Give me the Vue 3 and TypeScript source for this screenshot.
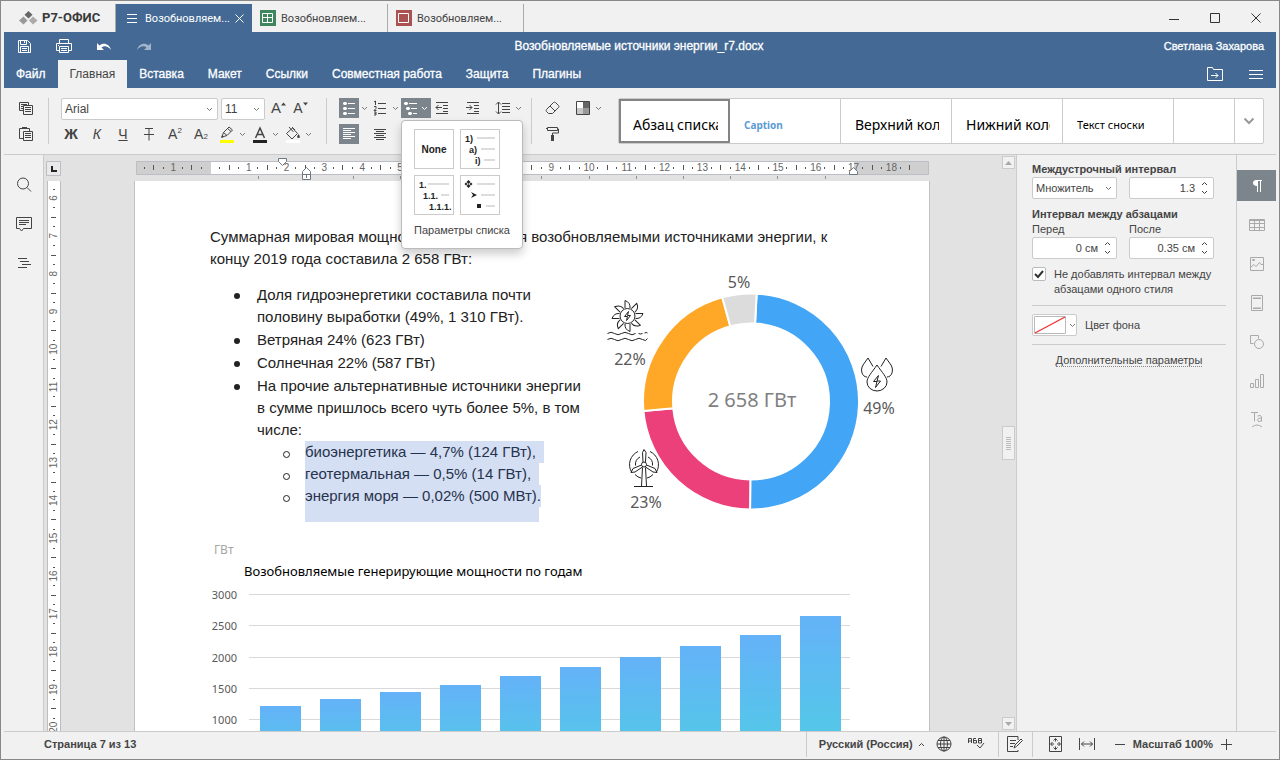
<script setup lang="ts">
import { ref } from 'vue'

interface Slice { from: number; to: number; color: string }

const menuTabs = ['Файл', 'Главная', 'Вставка', 'Макет', 'Ссылки', 'Совместная работа', 'Защита', 'Плагины']
const activeTab = ref('Главная')
const keepTogether = ref(true)

const styleItems = [
  { name: 'Абзац списка', kind: 'large' },
  { name: 'Caption', kind: 'caption' },
  { name: 'Верхний колонтитул', kind: 'large' },
  { name: 'Нижний колонтитул', kind: 'large' },
  { name: 'Текст сноски', kind: 'small' }
]

const CM = 37.8
const ORIGIN = 75
const rulerNumbers = [-1, ...Array.from({ length: 18 }, (_, i) => i + 1)]
const quarterTicks = Array.from({ length: 82 }, (_, i) => i - 7).filter(q => q % 4 !== 0 && q < 79)
const tabStops = Array.from({ length: 13 }, (_, i) => ORIGIN + (i + 1) * 47.2)
const atCm = (cm: number) => ORIGIN + cm * CM

const sideNumbers = Array.from({ length: 15 }, (_, i) => i + 6)
const sideTicks = Array.from({ length: 60 }, (_, i) => i + 23).filter(q => q % 4 !== 0)
const sideAt = (cm: number) => 17 + (cm - 6) * CM

const slices: Slice[] = [
  { from: 3, to: 180.5, color: '#42a5f5' },
  { from: 180.5, to: 265, color: '#ec407a' },
  { from: 265, to: 344.6, color: '#ffa726' },
  { from: 344.6, to: 363, color: '#dcdcdc' }
]
function ringPath(s: Slice): string {
  const cx = 151, cy = 131.5, outer = 108, inner = 78
  const p = (deg: number, r: number) => {
    const a = (deg * Math.PI) / 180
    return `${(cx + r * Math.sin(a)).toFixed(2)} ${(cy - r * Math.cos(a)).toFixed(2)}`
  }
  const large = s.to - s.from > 180 ? 1 : 0
  return `M${p(s.from, outer)}A${outer} ${outer} 0 ${large} 1 ${p(s.to, outer)}L${p(s.to, inner)}A${inner} ${inner} 0 ${large} 0 ${p(s.from, inner)}Z`
}

const capacities = [1216, 1328, 1440, 1552, 1696, 1840, 2000, 2176, 2352, 2656]
const axis = [3000, 2500, 2000, 1500, 1000, 500, 0]
const yOf = (v: number) => Math.round(10 + (3000 - v) / 16)
const petals = [0, 45, 90, 135, 180, 225, 270, 315]
</script>

<template>
  <div class="window">
    <svg class="defs" width="0" height="0" aria-hidden="true">
      <defs>
        <symbol id="caret" viewBox="0 0 7 5"><path d="M1 1l2.5 2.5L6 1" fill="none" stroke="currentColor" /></symbol>
        <symbol id="caret-up" viewBox="0 0 7 5"><path d="M1 4l2.5-2.5L6 4" fill="none" stroke="currentColor" /></symbol>
      </defs>
    </svg>

    <header class="titlebar">
      <div class="logo">
        <svg width="19" height="14" viewBox="0 0 19 14">
          <path d="M9.500 0l4 3.700-4 3.700-4-3.700z" fill="#666" />
          <path d="M4.500 5.500l4 4-4 4-4.500-4z" fill="#999" />
          <path d="M14 5.500l4.500 4-4.500 4-4-4z" fill="#aaa" />
        </svg>
        <span>Р7-ОФИС</span>
      </div>
      <div class="doc-tab current">
        <svg width="16" height="16" viewBox="0 0 16 16"><path d="M3 4.500h10M3 8.500h10M3 12.500h10" stroke="#fff" /></svg>
        <span>Возобновляем...</span>
        <button class="close" aria-label="Закрыть вкладку"><svg width="9" height="9" viewBox="0 0 9 9"><path d="M.5.5l8 8M8.500.5l-8 8" stroke="#fff" /></svg></button>
      </div>
      <div class="doc-tab">
        <svg width="16" height="16" viewBox="0 0 16 16"><path fill="#40865c" d="M0 0h16v16H0z" /><path d="M2.500 3.500h10v9h-10zM7.500 3v10M3 7.500h10" fill="none" stroke="#fff" /></svg>
        <span>Возобновляем...</span>
      </div>
      <div class="doc-tab">
        <svg width="16" height="16" viewBox="0 0 16 16"><path fill="#aa5252" d="M0 0h16v16H0z" /><path d="M2.500 3.500h10v9h-10z" fill="none" stroke="#fff" /></svg>
        <span>Возобновляем...</span>
      </div>
      <div class="window-buttons">
        <button aria-label="Свернуть"><svg width="12" height="12" viewBox="0 0 12 12"><path d="M1 7.500h10" /></svg></button>
        <button aria-label="Развернуть"><svg width="12" height="12" viewBox="0 0 12 12"><path d="M1.500 1.500h9v9h-9z" /></svg></button>
        <button aria-label="Закрыть"><svg width="12" height="12" viewBox="0 0 12 12"><path d="M1.500 1.500l9 9M10.500 1.500l-9 9" /></svg></button>
      </div>
    </header>

    <div class="brand">
      <div class="brand-row">
        <div class="quick">
          <button aria-label="Сохранить"><svg width="20" height="20" viewBox="0 0 20 20"><path d="M4.500 4.500h9l3 3v9h-12zM6.500 5v3.500h6V5M6.500 16v-5.500h8V16M8 12.500h5M8 14.500h5M10.500 5v2" /></svg></button>
          <button aria-label="Печать"><svg width="20" height="20" viewBox="0 0 20 20"><path d="M5.500 7V3.500h9V7M5 14.500H2.500v-7h15v7H15M5.500 10.500h9v6h-9zM7 12.500h6M7 14.500h6M4 9.500h1" /></svg></button>
          <button aria-label="Отменить"><svg width="20" height="20" viewBox="0 0 20 20"><path d="M3 7v7h7L7.500 11.500C10 9.500 14 10 17 14 15.500 7.500 9 6 5.500 9.500z" class="solid" /></svg></button>
          <button aria-label="Повторить" class="faded"><svg width="20" height="20" viewBox="0 0 20 20"><path d="M17 7v7h-7l2.500-2.500C10 9.500 6 10 3 14 4.500 7.500 11 6 14.500 9.500z" class="solid" /></svg></button>
        </div>
        <h1>Возобновляемые источники энергии_r7.docx</h1>
        <span class="user">Светлана Захарова</span>
      </div>
      <div class="brand-row">
        <nav class="menu-tabs">
          <button v-for="t in menuTabs" :key="t" :class="{ on: t === activeTab }" @click="activeTab = t">{{ t }}</button>
        </nav>
        <div class="brand-tools">
          <button aria-label="Открыть папку"><svg width="18" height="16" viewBox="0 0 18 16"><path d="M1.500 14.500v-13h5l1 2h9v11zM5 9.500h7M9.500 7l2.500 2.500L9.500 12" /></svg></button>
          <button aria-label="Параметры вида"><svg width="16" height="16" viewBox="0 0 16 16"><path d="M1 4.500h14M1 8.500h14M1 12.500h14" /></svg></button>
        </div>
      </div>
    </div>

    <div class="toolbar">
      <div class="group clip">
        <button class="tool" aria-label="Копировать"><svg width="20" height="20" viewBox="0 0 20 20"><path d="M7 12.500H3.500v-8h9V7M5 6.500h6M5 8.500h2M5 10.500h2M7.500 7.500h9v9h-9zM9 9.500h6M9 11.500h6M9 13.500h6" /></svg></button>
        <button class="tool" aria-label="Вставить"><svg width="20" height="20" viewBox="0 0 20 20"><path d="M7 14.500H3.500v-10h10V7M6 3.500h5M6 4.500h5M7.500 7.500h9v9h-9zM9 9.500h6M9 11.500h6M9 13.500h6" /></svg></button>
      </div>
      <div class="group text-group">
        <div class="row">
          <div class="combo family"><select aria-label="Шрифт"><option>Arial</option></select><svg width="7" height="5"><use href="#caret" /></svg></div>
          <div class="combo size"><select aria-label="Размер шрифта"><option>11</option></select><svg width="7" height="5"><use href="#caret" /></svg></div>
          <button class="tool glyph scale" aria-label="Увеличить шрифт"><span class="big">A</span><svg class="mark" width="5" height="4" viewBox="0 0 5 4"><path class="fill" d="M0 3.500L2.500.5 5 3.500z" /></svg></button>
          <button class="tool glyph scale" aria-label="Уменьшить шрифт"><span>A</span><svg class="mark" width="5" height="4" viewBox="0 0 5 4"><path class="fill" d="M0 .5h5L2.500 3.500z" /></svg></button>
        </div>
        <div class="row spaced">
          <button class="tool glyph"><b>Ж</b></button>
          <button class="tool glyph"><i>К</i></button>
          <button class="tool glyph"><u>Ч</u></button>
          <button class="tool glyph" aria-label="Зачёркнутый"><svg width="20" height="20" viewBox="0 0 20 20"><path d="M6 4.500h8M10 4.500v12M5 10.500h10" /></svg></button>
          <button class="tool glyph">A<sup>2</sup></button>
          <button class="tool glyph">A<sub>2</sub></button>
          <div class="splits">
            <button class="tool" aria-label="Цвет выделения"><svg width="20" height="20" viewBox="0 0 20 20"><path d="M5 13l1.500-4.500L12 3l3.500 3L10 11.500zM6.500 8.500L10 11.500M10.500 4.500l3.500 3" /><path class="fill" d="M4 14l1-3 2 2z" /><path d="M3 16h14v3H3z" fill="#ff0" class="swatch" /></svg></button>
            <button class="arrow" aria-label="Выбрать цвет выделения"><svg width="7" height="5"><use href="#caret" /></svg></button>
            <button class="tool" aria-label="Цвет шрифта"><svg width="20" height="20" viewBox="0 0 20 20"><path d="M5.500 14L10 4l4.500 10M7 10.500h6" stroke-width="1.500" /><path d="M3 16h14v3H3z" fill="#222" class="swatch" /></svg></button>
            <button class="arrow" aria-label="Выбрать цвет шрифта"><svg width="7" height="5"><use href="#caret" /></svg></button>
            <button class="tool" aria-label="Заливка"><svg width="20" height="20" viewBox="0 0 20 20"><path d="M3.500 9.500l6-5.500 5 5.500-5.500 5.500zM6 3l4.500 5M9 3l3 3" /><path class="fill" d="M15.500 10c2 2.500 1.500 4 0 4s-2-1.500 0-4z" /><path d="M3 16h14v3H3z" fill="#fff" class="swatch" /></svg></button>
            <button class="arrow" aria-label="Выбрать заливку"><svg width="7" height="5"><use href="#caret" /></svg></button>
          </div>
        </div>
      </div>
      <div class="group para-group">
        <div class="row flush">
          <button class="tool on" aria-label="Маркированный список"><svg width="20" height="20" viewBox="0 0 20 20"><path d="M9 5.500h7M9 10.500h7M9 15.500h7" /><path class="fill" d="M5 4h2l1 1v1L7 7H5L4 6V5zM5 9h2l1 1v1l-1 1H5l-1-1v-1zM5 14h2l1 1v1l-1 1H5l-1-1v-1z" /></svg></button>
          <button class="arrow" aria-label="Маркеры"><svg width="7" height="5"><use href="#caret" /></svg></button>
          <button class="tool" aria-label="Нумерованный список"><svg width="20" height="20" viewBox="0 0 20 20"><path d="M8 5.500h8M8 10.500h8M8 15.500h8M4 4l1.500-1v4M4 8.500h2v2L4 12.500h2.500M4 14h2v1.500H4.500M6 15.500V17H4" /></svg></button>
          <button class="arrow" aria-label="Нумерация"><svg width="7" height="5"><use href="#caret" /></svg></button>
          <div class="multi">
            <button class="tool on wide" aria-label="Многоуровневый список"><svg width="20" height="20" viewBox="0 0 20 20"><path d="M8 5.500h8M10 10.500h6M12 15.500h4" /><path class="fill" d="M4 4h2l1 1v1L6 7H4L3 6V5zM6 9h2l1 1v1l-1 1H6l-1-1v-1zM8 14h2l1 1v1l-1 1H8l-1-1v-1z" /></svg><svg width="7" height="5"><use href="#caret" /></svg></button>
            <div class="popup">
              <div class="presets">
                <button aria-label="Нет"><svg width="38" height="38" viewBox="0 0 38 38"><text class="none" x="19" y="23" text-anchor="middle">None</text></svg></button>
                <button aria-label="1) a) i)"><svg width="38" height="38" viewBox="0 0 38 38"><text x="4" y="12">1)</text><text x="8" y="23">a)</text><text x="14" y="34">i)</text><path d="M16 8h18M20 19h14M23 30h11" /></svg></button>
                <button aria-label="1. 1.1. 1.1.1."><svg width="38" height="38" viewBox="0 0 38 38"><text x="4" y="12">1.</text><text x="8" y="23">1.1.</text><text x="14" y="34">1.1.1.</text><path d="M13 8h21M26 19h8" /></svg></button>
                <button aria-label="Маркеры по уровням"><svg width="38" height="38" viewBox="0 0 38 38"><path class="ink" d="M7.500 4l2 2-2 2-2-2zM5 6.500l1.500 1.500L5 9.500 3.500 8zM10 6.500l1.500 1.500-1.500 1.500L8.500 8zM7.500 8l2 2-2 2-2-2zM10 16l6 3-6 3 2-3zM16 28h4v4h-4z" /><path d="M16 8h18M20 19h14M25 30h9" /></svg></button>
              </div>
              <button class="popup-item">Параметры списка</button>
            </div>
          </div>
          <button class="tool indent" aria-label="Уменьшить отступ"><svg width="20" height="20" viewBox="0 0 20 20"><path d="M4 4.500h12M11 7.500h5M11 10.500h5M11 13.500h5M4 15.500h12M4 9.500h6M6.500 7L4 9.500 6.500 12" /></svg></button>
          <button class="tool indent" aria-label="Увеличить отступ"><svg width="20" height="20" viewBox="0 0 20 20"><path d="M4 4.500h12M11 7.500h5M11 10.500h5M11 13.500h5M4 15.500h12M3 9.500h6M6.500 7L9 9.500 6.500 12" /></svg></button>
          <button class="tool" aria-label="Междустрочный интервал"><svg width="20" height="20" viewBox="0 0 20 20"><path d="M9 5.500h8M9 8.500h8M9 11.500h8M9 14.500h8M5.500 4v12M3 6.500L5.500 4 8 6.500M3 13.500L5.500 16 8 13.500" /></svg></button>
          <button class="arrow" aria-label="Выбрать интервал"><svg width="7" height="5"><use href="#caret" /></svg></button>
        </div>
        <div class="row aligns">
          <button class="tool on" aria-label="По левому краю"><svg width="20" height="20" viewBox="0 0 20 20"><path d="M4 4.500h12M4 6.500h8M4 8.500h12M4 10.500h8M4 12.500h12M4 14.500h8" /></svg></button>
          <button class="tool" aria-label="По центру"><svg width="20" height="20" viewBox="0 0 20 20"><path d="M4 5.500h12M6 7.500h8M4 9.500h12M6 11.500h8M4 13.500h12M6 15.500h8" /></svg></button>
        </div>
      </div>
      <div class="group last">
        <div class="row flush">
          <button class="tool eraser" aria-label="Очистить стиль"><svg width="20" height="20" viewBox="0 0 20 20"><path d="M4.500 11.500l7-7q1-.8 2 0l3 3q1 1 0 2l-6 6h-4l-2-2q-.8-1 0-2zM8 8l5 5" /></svg></button>
          <button class="tool" aria-label="Цветовая схема"><svg width="20" height="20" viewBox="0 0 20 20"><path class="pale" fill="#fff" d="M4 4h12v12H4z" /><path class="pale" fill="#666" d="M10 4h6v6h-6z" /><path class="pale" fill="#c8c8c8" d="M4 10h6v6H4z" /><path class="pale" fill="#999" d="M10 10h6v6h-6z" /><path d="M3.500 3.500h13v13h-13z" /></svg></button>
          <button class="arrow" aria-label="Выбрать схему"><svg width="7" height="5"><use href="#caret" /></svg></button>
        </div>
        <div class="row">
          <button class="tool" aria-label="Копировать стиль"><svg width="20" height="20" viewBox="0 0 20 20"><path d="M5.500 3.500h10v3h-10zM15.500 5h1v4h-6v3" /><path d="M4 4.500h1.500" /><path class="fill" d="M9 11h3v6H9z" /></svg></button>
        </div>
      </div>
      <div class="gallery">
        <button v-for="(s, i) in styleItems" :key="s.name" :class="['style', s.kind, { chosen: i === 0 }]"><span>{{ s.name }}</span></button>
        <div class="rest"></div>
        <button class="more" aria-label="Все стили"><svg width="12" height="8" viewBox="0 0 12 8"><path d="M1.500 1.500l4.500 4.500 4.500-4.500" fill="none" stroke="#999" stroke-width="2" /></svg></button>
      </div>
    </div>

    <div class="workspace">
      <aside class="left-bar">
        <button aria-label="Поиск"><svg width="20" height="20" viewBox="0 0 20 20"><circle cx="9" cy="8.500" r="5.500" /><path d="M13 12.500l4 4" /></svg></button>
        <button aria-label="Комментарии"><svg width="20" height="20" viewBox="0 0 20 20"><path d="M2.500 3.500h15v11h-8L7.500 17l-2-2.500h-3zM5 6.500h10M5 8.500h10M5 10.500h7" /></svg></button>
        <button aria-label="Навигация"><svg width="20" height="20" viewBox="0 0 20 20"><path d="M4 5.500h9M6 8.500h9M8 11.500h9M4 14.500h9" /></svg></button>
      </aside>

      <main class="editor">
        <div class="corner"><svg width="15" height="15" viewBox="0 0 15 15"><path d="M.5.5h14v14H.5z" fill="#e9e9e9" stroke="#bbbec2" /><path d="M6 5v5h5" fill="none" stroke="#222" stroke-width="2" /></svg></div>
        <svg class="side-ruler" width="14" height="550" viewBox="0 0 14 550">
          <path d="M0 0h14v550H0z" fill="#fff" /><path d="M.5 0v550M13.500 0v550" stroke="#bbbec2" />
          <path v-for="q in sideTicks" :key="q" :d="q % 2 ? `M6 ${Math.round(sideAt(q / 4))}.5h2` : `M4 ${Math.round(sideAt(q / 4))}.5h5`" stroke="#555" />
          <text v-for="n in sideNumbers" :key="n" :transform="`translate(10 ${sideAt(n)}) rotate(-90)`" text-anchor="middle">{{ n }}</text>
        </svg>

        <div class="canvas">
          <svg class="ruler" width="793" height="20" viewBox="0 0 793 20">
            <path d="M.5.5h792v13H.5z" fill="#cfcfcf" stroke="#bbbec2" /><path d="M75 1h643v12H75z" fill="#fff" />
            <path v-for="q in quarterTicks" :key="q" :d="q % 2 ? `M${Math.round(atCm(q / 4)) - 1}.5 6v2` : `M${Math.round(atCm(q / 4)) - 1}.5 4v5`" stroke="#555" />
            <text v-for="n in rulerNumbers" :key="n" :x="atCm(n)" y="10" text-anchor="middle">{{ Math.abs(n) }}</text>
            <path v-for="t in tabStops" :key="t" :d="`M${Math.round(t)}.5 15v3`" stroke="#8a93a6" />
            <g fill="#fff" stroke="#6f7782"><path d="M142.500-2.500h8v3l-4 4-4-4z" /><path d="M166.500 18.500v-8l4-4 4 4v8zM166.500 13.500h8M170.500 14v3" /><path d="M713.500 13.500v-3l4-4 4 4v3z" /></g>
          </svg>
          <article class="page">
            <p>Суммарная мировая мощность, создаваемая возобновляемыми источниками энергии, к<br />концу 2019 года составила 2 658 ГВт:</p>
            <div class="columns">
              <ul>
                <li>Доля гидроэнергетики составила почти<br />половину выработки (49%, 1 310 ГВт).</li>
                <li>Ветряная 24% (623 ГВт)</li>
                <li>Солнечная 22% (587 ГВт)</li>
                <li>На прочие альтернативные источники энергии<br />в сумме пришлось всего чуть более 5%, в том<br />числе:
                  <ul class="inner">
                    <li><span>биоэнергетика — 4,7% (124 ГВт),</span></li>
                    <li><span>геотермальная — 0,5% (14 ГВт),</span></li>
                    <li><span>энергия моря — 0,02% (500 МВт).</span></li>
                  </ul>
                </li>
              </ul>
              <svg class="donut" width="300" height="250" viewBox="0 0 300 250">
                <path v-for="s in slices" :key="s.color" :d="ringPath(s)" :fill="s.color" stroke="#fff" stroke-width="2" />
                <text class="total" x="152" y="137" text-anchor="middle">2 658 ГВт</text>
                <g class="pct" text-anchor="middle"><text x="139" y="18">5%</text><text x="30" y="95">22%</text><text x="46" y="238">23%</text><text x="279" y="144">49%</text></g>
                <g class="sketch">
                  <g transform="translate(27.500 46)">
                    <circle r="7.500" />
                    <path v-for="a in petals" :key="a" :transform="`rotate(${a})`" d="M-2.500-8V-15.500Q3-13.500 2.500-8" />
                    <path d="M1-4.500L-3 .5H0L-1 4.500 3-.5H0z" />
                    <path d="M-20 17.500q3.500-2.500 7 0t7 0 7 0 7 0M11 17.500q2 1 4 0M17 17q2-1 3 0M-20 23.500q3.500-2.500 7 0t7 0 7 0 7 0 7 0 5-1" />
                  </g>
                  <g transform="translate(277 94)">
                    <path d="M0 1C5 8.500 10 13 10 18A10 9 0 0 1-10 18C-10 13-5 8.500 0 1z" />
                    <path d="M1.500 11.500l-5 6H0l-1.500 6 5-6.500H0z" />
                    <path d="M-10 13C-15 13-17 6-14 1L-9-6L-4 2.500M10 13C15 13 17 6 14 1L9-6 4 2.500" />
                  </g>
                  <g transform="translate(44 194.500)">
                    <circle r="2.500" /><path d="M-1-2.500L-1.500-12 0-15 2-12 1.500-2.500M-2.500.5L-11 4-13 8-9 7.500-1.500 2.500M2.500.5L11 4l2 4-4-.5L1.500 2.500M-1.500 3L-2.500 21.500M1.500 3L2.500 21.500M-10 22h19" />
                    <path d="M-12.500 7.500A14.500 14.500 0 0 1-6-13M6-13A14.500 14.500 0 0 1 12.500 7.500M-8.500 1A8.500 8.500 0 0 1-4-7.500M4-7.500A8.500 8.500 0 0 1 8.500 1M-9 10q3 3 6 3.500M9 10q-3 3-6 3.500" />
                  </g>
                </g>
              </svg>
            </div>
            <svg class="chart" width="650" height="240" viewBox="0 -46 650 240">
              <defs><linearGradient id="bar" x1="0" y1="0" x2="0" y2="1"><stop offset="0" stop-color="#64b2f8" /><stop offset="1" stop-color="#4dd0e1" /></linearGradient></defs>
              <text class="unit" x="4" y="-30">ГВт</text>
              <text class="caption" x="34" y="-8">Возобновляемые генерирующие мощности по годам</text>
              <g v-for="v in axis" :key="v"><path :d="`M39 ${yOf(v)}.5h601`" stroke="#d9d9d9" /><text class="tick" x="27" :y="yOf(v) + 5" text-anchor="end">{{ v }}</text></g>
              <rect v-for="(c, i) in capacities" :key="i" :x="50 + i * 60" :y="yOf(c)" width="41" :height="yOf(0) - yOf(c)" fill="url(#bar)" />
            </svg>
          </article>
        </div>

        <div class="scrollbar">
          <button aria-label="Прокрутить вверх"><svg width="7" height="4" viewBox="0 0 7 4"><path d="M0 4l3.500-4L7 4z" fill="#aaa" /></svg></button>
          <div class="thumb"><svg width="5" height="13" viewBox="0 0 5 13"><path d="M0 .5h5M0 2.500h5M0 4.500h5M0 6.500h5M0 8.500h5M0 10.500h5M0 12.500h5" stroke="#bbb" /></svg></div>
          <button aria-label="Прокрутить вниз"><svg width="7" height="4" viewBox="0 0 7 4"><path d="M0 0l3.500 4L7 0z" fill="#aaa" /></svg></button>
        </div>
      </main>

      <aside class="panel">
        <label for="spacing" class="heading">Междустрочный интервал</label>
        <div class="pair">
          <div class="combo"><select id="spacing"><option>Множитель</option></select><svg width="7" height="5"><use href="#caret" /></svg></div>
          <div class="spin"><input type="text" value="1.3" aria-label="Значение интервала" /><div><button aria-label="Больше"><svg width="7" height="5"><use href="#caret-up" /></svg></button><button aria-label="Меньше"><svg width="7" height="5"><use href="#caret" /></svg></button></div></div>
        </div>
        <span class="heading second">Интервал между абзацами</span>
        <div class="pair names"><label for="before">Перед</label><label for="after">После</label></div>
        <div class="pair">
          <div class="spin"><input id="before" type="text" value="0 см" /><div><button aria-label="Больше"><svg width="7" height="5"><use href="#caret-up" /></svg></button><button aria-label="Меньше"><svg width="7" height="5"><use href="#caret" /></svg></button></div></div>
          <div class="spin"><input id="after" type="text" value="0.35 см" /><div><button aria-label="Больше"><svg width="7" height="5"><use href="#caret-up" /></svg></button><button aria-label="Меньше"><svg width="7" height="5"><use href="#caret" /></svg></button></div></div>
        </div>
        <label class="check">
          <span class="box"><input v-model="keepTogether" type="checkbox" /><svg v-if="keepTogether" width="10" height="9" viewBox="0 0 10 9"><path d="M1 4l3 3 5-6" fill="none" stroke="#333" stroke-width="2" /></svg></span>
          <span>Не добавлять интервал между<br />абзацами одного стиля</span>
        </label>
        <div class="background">
          <button id="fill" class="color" aria-labelledby="fill-name"><svg width="32" height="18" viewBox="0 0 32 18"><path d="M.5.5h31v17H.5z" fill="#fff" stroke="#bbb" /><path d="M1 17L31 1" stroke="#f03030" stroke-width="1.200" /></svg><svg width="7" height="5"><use href="#caret" /></svg></button>
          <span id="fill-name">Цвет фона</span>
        </div>
        <div class="advanced"><a href="#">Дополнительные параметры</a></div>
      </aside>

      <aside class="right-bar">
        <button class="on" aria-label="Параметры абзаца"><svg width="20" height="20" viewBox="0 0 20 20"><path class="solid" d="M8.500 4h6.500v1h-1v11h-1V5h-2v11h-1v-6q-4-.3-4-3t2.500-3z" /></svg></button>
        <button aria-label="Параметры таблицы"><svg width="20" height="20" viewBox="0 0 20 20"><path d="M2.500 4.500h15v11h-15zM3 5.500h14M3 8.500h14M3 12.500h14M7.500 5v11M12.500 5v11" /></svg></button>
        <button aria-label="Параметры изображения"><svg width="20" height="20" viewBox="0 0 20 20"><path d="M3.500 3.500h13v13h-13zM4 13l3-2.500 2 2 3.500-4 1.500 2h2.500M5.500 6.500h2v-1h-2z" /></svg></button>
        <button aria-label="Колонтитулы"><svg width="20" height="20" viewBox="0 0 20 20"><path d="M4.500 2.500h11v15h-11zM6 5h8M6 15h8" /><path d="M6 5.500h8M6 15.500h8" /></svg></button>
        <button aria-label="Параметры фигуры"><svg width="20" height="20" viewBox="0 0 20 20"><path d="M6.500 11.500h-3v-8h8v3" /><circle cx="12" cy="12" r="4.500" /></svg></button>
        <button aria-label="Параметры диаграммы"><svg width="20" height="20" viewBox="0 0 20 20"><path d="M3.500 12.500h3v4h-3zM8.500 8.500h3v8h-3zM13.500 3.500h3v13h-3z" /></svg></button>
        <button aria-label="Параметры объекта"><svg width="20" height="20" viewBox="0 0 20 20"><path d="M4 2.500h7M7.500 2.500v9M10.500 6q4-1.500 4 1v4.500M14.500 8q-4 0-4 1.800t2 1.700 2-1.500M5 17q5-4 10 0" /></svg></button>
      </aside>
    </div>

    <footer class="status">
      <span class="pages">Страница 7 из 13</span>
      <div class="cell lang">
        <button class="text">Русский (Россия)<svg width="7" height="5"><use href="#caret-up" /></svg></button>
        <button aria-label="Язык документа"><svg width="16" height="16" viewBox="0 0 16 16"><circle cx="8" cy="8" r="7" /><ellipse cx="8" cy="8" rx="3.500" ry="7" /><path d="M8 1v14M1 8h14M2 4.500h12M2 11.500h12" /></svg></button>
        <button class="spell" aria-label="Проверка орфографии"><svg width="18" height="16" viewBox="0 0 18 16"><path d="M1.500 7V2.500h3V7M1.500 5h3M9 2.500H6.500V7h3V4.500h-3M11.500 2.500h3V7h-3zM11.500 4.500h3" /><path d="M10 9l3 3 4-5" /></svg></button>
      </div>
      <div class="cell review"><button aria-label="Рецензирование"><svg width="16" height="18" viewBox="0 0 16 18"><path d="M11 15v1.500H.5V1.500H11V5M3 5.500h6M3 8.500h5M3 11.500h3M7 13l1-3 6-6 1.500 1.500-6 6z" /></svg></button></div>
      <div class="cell zoom">
        <button aria-label="По размеру страницы"><svg width="14" height="16" viewBox="0 0 14 16"><path d="M.5.5h12v15H.5zM6.500 2.500v3M6.500 10.500v3M2 8h3M8 8h3M4.500 4.500l2-2 2 2M4.500 11.500l2 2 2-2M3.500 6L1.500 8l2 2M9.500 6l2 2-2 2" /></svg></button>
        <button aria-label="По ширине"><svg width="16" height="12" viewBox="0 0 16 12"><path d="M.5 0v12M15.500 0v12M2.500 6h11M5 3.500L2.500 6 5 8.500M11 3.500L13.500 6 11 8.500" /></svg></button>
        <button class="minus" aria-label="Уменьшить масштаб"><svg width="10" height="11" viewBox="0 0 10 11"><path d="M0 5.500h10" /></svg></button>
        <button class="text">Масштаб 100%</button>
        <button class="plus" aria-label="Увеличить масштаб"><svg width="11" height="11" viewBox="0 0 11 11"><path d="M0 5.500h11M5.500 0v11" /></svg></button>
      </div>
    </footer>
  </div>
</template>

<style>
body { margin: 0; overflow: hidden; }
</style>

<style scoped>
* { box-sizing: border-box; }
.window {
  display: flex; flex-direction: column; height: 100vh; padding: 0 3px 3px;
  border: 1px solid #888; background: #f1f1f1; color: #444;
  font: 11px/15px "Liberation Sans", Arial, sans-serif;
}
.defs { position: absolute; }
button { display: flex; align-items: center; justify-content: center; padding: 0; border: 0; background: none; color: inherit; font: inherit; }
button svg, .combo svg, .doc-tab svg, .logo svg { flex: none; }
h1, p, ul { margin: 0; padding: 0; }
svg { display: block; }

.titlebar { display: flex; align-items: stretch; height: 31px; padding-top: 3px; font: 11px/15px Roboto, "Noto Sans", sans-serif; }
.logo { display: flex; align-items: center; gap: 4px; width: 112px; padding-left: 15px; border-right: 1px solid #aaa; color: #3a3a3a; font: bold 13px/18px Roboto, "Noto Sans", sans-serif; }
.doc-tab { display: flex; align-items: center; gap: 5px; width: 136px; padding: 0 8px; border-right: 1px solid #aaa; }
.doc-tab.current { border-right: 0; background: #446995; color: #fff; }
.doc-tab span { width: 84px; white-space: nowrap; }
.close { margin-left: 1px; }
.window-buttons { display: flex; gap: 29px; align-items: center; margin-left: auto; padding-right: 14px; }
.window-buttons svg { fill: none; stroke: #333; }

.brand { background: #446995; color: #fff; font-size: 12px; }
.brand-row { display: flex; align-items: center; height: 28px; }
.brand svg { fill: none; stroke: #fff; }
.brand .solid { fill: #fff; stroke: none; }
.quick { display: flex; flex: 1; gap: 20px; padding-left: 10px; }
.faded { opacity: 0.5; }
h1 { font-size: 12px; font-weight: normal; line-height: 16px; -webkit-text-stroke: 0.3px #fff; }
.user { flex: 1; padding-right: 12px; text-align: right; font-size: 11px; -webkit-text-stroke: 0.3px #fff; }
.menu-tabs { display: flex; align-self: stretch; flex: 1; }
.menu-tabs button { padding: 0 12px; -webkit-text-stroke: 0.3px #fff; }
.menu-tabs .on { background: #f1f1f1; color: #444; -webkit-text-stroke: 0; }
.brand-tools { display: flex; gap: 24px; padding-right: 12px; }

.toolbar { display: flex; height: 67px; padding: 10px 12px 10px 0; border-bottom: 1px solid #cbcbcb; }
.group { display: flex; flex-direction: column; gap: 4px; height: 46px; padding: 0 12px; border-right: 1px solid #cbcbcb; }
.group.clip { gap: 6px; width: 45px; }
.group.text-group { width: 278px; }
.group.para-group { width: 205px; padding-right: 6px; }
.group.last { width: 86px; padding-left: 10px; border: 0; }
.row { display: flex; height: 22px; gap: 2px; align-items: flex-start; }
.row + .row { height: 20px; }
.row.flush { gap: 0; }
.row.spaced { gap: 6px; }
.row.aligns { gap: 11px; }
.splits { display: flex; }
.splits .arrow { margin-right: 2px; }
.eraser { margin-right: 11px; }
.tool { width: 20px; height: 20px; flex: none; }
.tool svg { fill: none; stroke: #444; }
.tool .fill { fill: #444; stroke: none; }
.tool .swatch, .tool .pale { stroke: none; }
.tool.on { background: #7d858c; color: #fff; }
.tool.on svg { stroke: #fff; }
.tool.on .fill { fill: #fff; }
.tool.wide { width: 30px; padding-right: 3px; }
.glyph { font-size: 14px; line-height: 20px; }
.glyph .big { font-size: 15px; }
.glyph .mark { align-self: flex-start; margin-top: 4px; }
.scale { padding-left: 3px; }
.glyph sup, .glyph sub { font-size: 8px; line-height: 8px; }
.glyph sup { align-self: flex-start; margin-top: 3px; }
.glyph sub { align-self: flex-end; margin-bottom: 3px; }
.glyph b { font-size: 15px; }
.arrow { width: 11px; height: 20px; color: #777; }
.indent { width: 22px; margin-right: 9px; }
.combo { display: flex; align-items: center; height: 22px; padding-right: 4px; border: 1px solid #cbcbcb; border-radius: 2px; background: #fff; color: #777; }
.combo select { flex: 1; min-width: 0; height: 20px; padding: 0 0 0 3px; border: 0; appearance: none; background: none; color: #444; font: inherit; }
.toolbar .combo { font-size: 12px; }
.combo.family { width: 157px; flex: none; }
.combo.size { width: 44px; margin-left: 1px; flex: none; }

.multi { position: relative; }
.popup { position: absolute; z-index: 5; top: 22px; left: 0; width: 122px; height: 129px; padding: 8px 12px; border: 1px solid #bbb; border-radius: 4px; background: #fff; box-shadow: 0 5px 10px rgba(0, 0, 0, 0.2); }
.presets { display: grid; grid-template-columns: 40px 40px; gap: 6px; }
.presets button { width: 40px; height: 40px; border: 1px solid #cbcbcb; }
.presets text { fill: #222; font: bold 9px "Liberation Sans", Arial, sans-serif; }
.presets .none { font-size: 10px; }
.presets path { stroke: #dcdcdc; stroke-width: 2; }
.presets .ink { fill: #222; stroke: none; }
.popup-item { margin-top: 8px; white-space: nowrap; }

.gallery { display: flex; flex: 1; height: 46px; border: 1px solid #cbcbcb; border-radius: 2px; background: #fff; color: #000; }
.style { width: 111px; padding: 8px 12px 0 14px; justify-content: flex-start; border-right: 1px solid #cbcbcb; font: 14px/20px "Noto Sans", sans-serif; }
.style span { overflow: hidden; white-space: nowrap; }
.style.chosen { border: 2px solid #848484; padding: 8px 10px 0 12px; }
.style.caption { color: #5b9bd5; font-size: 10px; font-weight: bold; }
.style.small { font-size: 11px; }
.rest { flex: 1; }
.more { width: 29px; border-left: 1px solid #cbcbcb; }

.workspace { display: flex; flex: 1; min-height: 0; }
.left-bar, .right-bar { display: flex; flex-direction: column; flex: none; width: 40px; }
.left-bar { gap: 19px; padding-top: 20px; align-items: center; border-right: 1px solid #cbcbcb; }
.left-bar svg { fill: none; stroke: #444; }
.editor { display: grid; grid-template: 26px 1fr / 18px 1fr 14px; flex: 1; min-width: 0; background: #e2e2e2; }
.corner { padding: 6px 0 0 2px; }
.side-ruler { grid-row: 2; grid-column: 1; margin-left: 3px; }
.side-ruler text, .ruler text { fill: #666; font: 10px "Liberation Sans", Arial, sans-serif; }
.canvas { display: flex; flex-direction: column; grid-row: 1 / 3; grid-column: 2; align-items: center; overflow: hidden; min-height: 0; padding-top: 6px; }
.ruler { flex: none; overflow: visible; }
.page { flex: 1; width: 796px; min-height: 0; overflow: hidden; padding: 45px 0 0 75px; border: 1px solid #c0c2c8; border-width: 0 1px; background: #fff; color: #222; font-size: 15px; line-height: 22px; white-space: nowrap; }
.columns { display: flex; margin-top: 14px; }
.columns ul { list-style: none; }
.columns > ul { width: 390px; padding-left: 47px; }
.columns li { position: relative; margin-bottom: 1px; }
.columns > ul > li::before { position: absolute; top: 9px; left: -23px; width: 6px; height: 6px; border-radius: 50%; background: #222; content: ""; }
.columns .inner { width: 234px; margin-left: 48px; padding-bottom: 15px; background: #d5dff4; color: #26334d; }
.columns .inner li { margin: 0; }
.inner span { display: inline-block; padding-right: 8px; background: #d5dff4; }
.inner li:last-child span { padding: 0; }
.inner li::before { position: absolute; top: 10px; left: -22px; width: 5px; height: 5px; border: 1px solid #222; border-radius: 50%; content: ""; }
.donut { flex: none; margin-top: -14px; }
.donut text, .chart text { font-family: "Noto Sans", sans-serif; }
.total { fill: #7f7f7f; font-size: 20px; }
.pct { fill: #595959; font-size: 16px; }
.sketch { fill: none; stroke: #222; }
.chart { margin-top: 15px; }
.unit { fill: #a6a6a6; font-size: 12px; }
.chart .caption { fill: #000; font-size: 13px; }
.tick { fill: #595959; font-size: 11px; }

.scrollbar { display: flex; flex-direction: column; grid-row: 1 / 3; grid-column: 3; justify-content: space-between; padding: 1px 1px 1px 0; }
.scrollbar button, .thumb { width: 13px; height: 13px; border: 1px solid #cbcbcb; background: #f1f1f1; }
.thumb { display: flex; align-items: center; justify-content: center; height: 34px; }

.panel { width: 220px; flex: none; padding: 7px 10px 0 15px; border-left: 1px solid #cbcbcb; }
.heading { display: block; font-weight: bold; line-height: 15px; }
.heading.second { margin-top: 8px; }
.pair { display: grid; grid-template-columns: 85px 85px; gap: 12px; }
.spin { display: flex; height: 22px; border: 1px solid #cbcbcb; border-radius: 2px; background: #fff; }
.spin input { flex: 1; min-width: 0; width: 0; padding: 0; border: 0; background: none; color: #444; font: inherit; text-align: right; }
.spin div { display: flex; flex-direction: column; width: 18px; justify-content: space-evenly; }
.check { display: flex; gap: 8px; margin-top: 8px; padding-bottom: 8px; border-bottom: 1px solid #cbcbcb; white-space: nowrap; }
.box { display: grid; width: 14px; height: 14px; place-items: center; }
.box > * { grid-area: 1 / 1; }
.box input { width: 14px; height: 14px; margin: 0; appearance: none; border: 1px solid #bbb; border-radius: 2px; background: #fff; }
.box svg { pointer-events: none; }
.background { display: flex; align-items: center; gap: 8px; padding: 8px 0; border-bottom: 1px solid #cbcbcb; }
.color { gap: 3px; width: 45px; height: 22px; border: 1px solid #cbcbcb; border-radius: 2px; background: #fff; color: #777; }
.advanced { padding-top: 8px; text-align: center; }
.advanced a { border-bottom: 1px dotted #888; color: #444; text-decoration: none; }

.right-bar { gap: 8px; padding-top: 15px; border-left: 1px solid #cbcbcb; }
.right-bar button { height: 31px; }
.right-bar svg { fill: none; stroke: #aaa; }
.right-bar .on { background: #7d858c; }
.right-bar .solid { fill: #fff; stroke: none; }

.status { display: flex; height: 25px; align-items: center; padding-right: 44px; border-top: 1px solid #cbcbcb; font-weight: bold; }
.status svg { fill: none; stroke: #444; }
.pages { flex: 1; padding-left: 40px; }
.cell { display: flex; height: 25px; align-items: center; border-left: 1px solid #cbcbcb; }
.lang { width: 192px; padding-left: 12px; gap: 11px; }
.lang .text { gap: 5px; }
.spell { margin-left: 4px; }
.review { width: 34px; justify-content: center; }
.zoom { padding-left: 16px; gap: 16px; }
.zoom .text { margin: 0 -8px; }
.minus { margin-left: 4px; }
</style>
